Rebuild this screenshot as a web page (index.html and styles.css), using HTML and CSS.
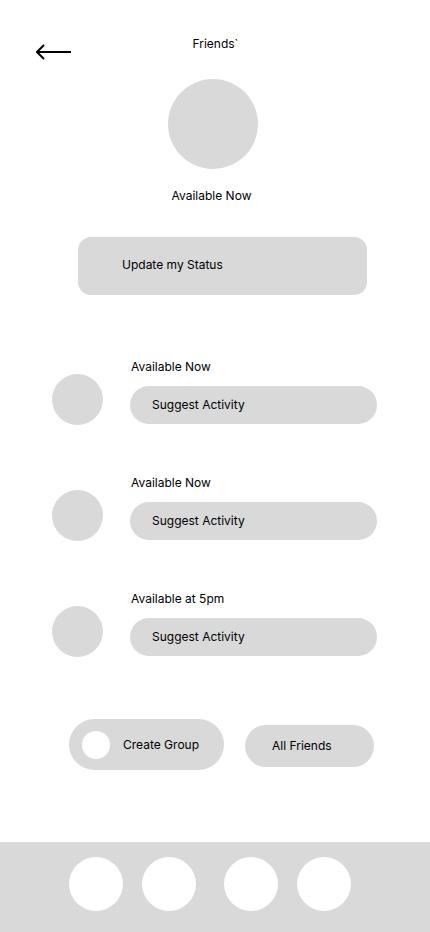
FILE: index.html
```html
<!DOCTYPE html>
<html lang="en">
<head>
<meta charset="utf-8">
<title>Friends</title>
<link rel="stylesheet" href="styles.css">
</head>
<body>
<div class="page">
  <main class="content">
    <header class="header">
      <button class="back" aria-label="Back">
        <svg width="36" height="16" viewBox="0 0 36 16" fill="none" stroke="#000" stroke-width="2">
          <path d="M1 8 H35" />
          <path d="M8 1 L1 8 L8 15" stroke-linejoin="miter" />
        </svg>
      </button>
      <h1 class="title">Friends`</h1>
    </header>

    <section class="profile">
      <div class="avatar-lg"></div>
      <p class="status">Available Now</p>
    </section>

    <button class="update-btn">Update my Status</button>

    <ul class="friends">
      <li class="friend">
        <div class="avatar"></div>
        <div class="friend-body">
          <span class="friend-status">Available Now</span>
          <button class="pill">Suggest Activity</button>
        </div>
      </li>
      <li class="friend">
        <div class="avatar"></div>
        <div class="friend-body">
          <span class="friend-status">Available Now</span>
          <button class="pill">Suggest Activity</button>
        </div>
      </li>
      <li class="friend">
        <div class="avatar"></div>
        <div class="friend-body">
          <span class="friend-status">Available at 5pm</span>
          <button class="pill">Suggest Activity</button>
        </div>
      </li>
    </ul>

    <div class="actions">
      <button class="create-btn"><span class="dot"></span>Create Group</button>
      <button class="all-btn">All Friends</button>
    </div>
  </main>

  <nav class="nav">
    <div class="nav-group">
      <span class="nav-item"></span>
      <span class="nav-item"></span>
    </div>
    <div class="nav-group">
      <span class="nav-item"></span>
      <span class="nav-item"></span>
    </div>
  </nav>
</div>
</body>
</html>
```

FILE: styles.css
```css
* {
  box-sizing: border-box;
}

html, body {
  margin: 0;
  padding: 0;
  background: #fff;
}

body {
  font-family: Inter, "Noto Sans", "Liberation Sans", sans-serif;
  font-size: 12px;
  line-height: 16px;
  color: #000;
}

button {
  font: inherit;
  color: inherit;
  border: 0;
  margin: 0;
  padding: 0;
  background: none;
  cursor: pointer;
  text-align: left;
}

.page {
  width: 430px;
  min-height: 932px;
  display: flex;
  flex-direction: column;
}

.content {
  flex: 1;
  display: flex;
  flex-direction: column;
}

.header {
  position: relative;
  padding-top: 36px;
  display: flex;
  justify-content: center;
}

.back {
  position: absolute;
  left: 36px;
  top: 44px;
  width: 36px;
  height: 16px;
  display: block;
}

.back svg {
  display: block;
}

.title {
  margin: 0;
  font-size: 12px;
  font-weight: 400;
  line-height: 16px;
  padding-left: 1px;
}

.profile {
  margin-top: 27px;
  display: flex;
  flex-direction: column;
  align-items: center;
  padding-right: 4px;
}

.avatar-lg {
  width: 90px;
  height: 90px;
  border-radius: 50%;
  background: #d9d9d9;
}

.status {
  margin: 19px 0 0;
  padding-right: 3px;
}

.update-btn {
  margin: 33px 0 0 78px;
  width: 289px;
  height: 58px;
  border-radius: 13px;
  background: #d9d9d9;
  padding-left: 44px;
  padding-bottom: 2px;
}

.friends {
  list-style: none;
  margin: 64px 0 0;
  padding: 0 0 0 52px;
  display: flex;
  flex-direction: column;
  gap: 51px;
}

.friend {
  display: flex;
  align-items: flex-end;
  gap: 27px;
}

.avatar {
  width: 51px;
  height: 51px;
  border-radius: 50%;
  background: #d9d9d9;
  margin-bottom: -1px;
  flex: none;
}

.friend-body {
  display: flex;
  flex-direction: column;
  gap: 11px;
}

.friend-status {
  display: block;
  padding-left: 1px;
}

.pill {
  width: 247px;
  height: 38px;
  border-radius: 19px;
  background: #d9d9d9;
  padding-left: 22px;
}

.actions {
  margin-top: 63px;
  padding-left: 69px;
  display: flex;
  align-items: center;
  gap: 21px;
}

.create-btn {
  width: 155px;
  height: 51px;
  border-radius: 26px;
  background: #d9d9d9;
  display: flex;
  align-items: center;
  padding-left: 13px;
  gap: 13px;
}

.dot {
  width: 28px;
  height: 28px;
  border-radius: 50%;
  background: #fff;
  flex: none;
}

.all-btn {
  width: 129px;
  height: 42px;
  border-radius: 21px;
  background: #d9d9d9;
  padding-left: 27px;
  margin-top: 3px;
}

.nav {
  height: 90px;
  background: #d9d9d9;
  display: flex;
  align-items: flex-start;
  padding: 15px 0 0 69px;
  gap: 28px;
}

.nav-group {
  display: flex;
  gap: 19px;
}

.nav-item {
  width: 54px;
  height: 54px;
  border-radius: 50%;
  background: #fff;
  display: block;
}
```
